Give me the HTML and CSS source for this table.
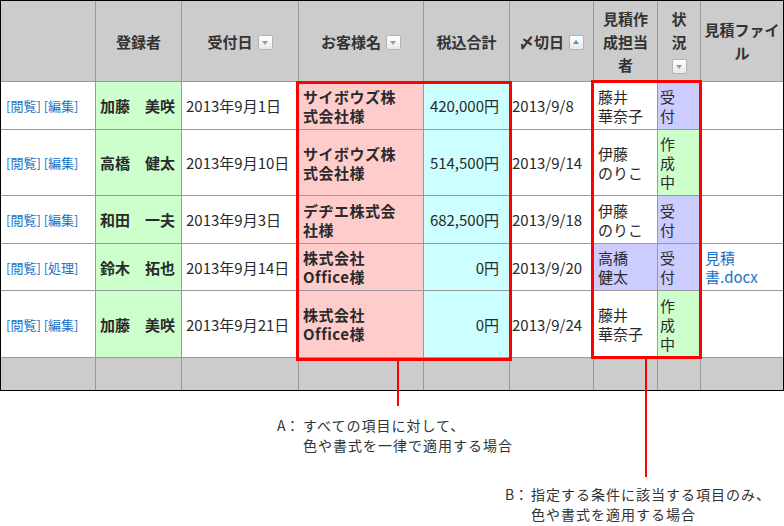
FILE: index.html
```html
<!DOCTYPE html>
<html lang="ja">
<head>
<meta charset="utf-8">
<title>条件書式の例</title>
<link rel="stylesheet" href="styles.css">
</head>
<body>
<div class="figure">
  <div class="frame">
    <table class="grid">
      <thead>
        <tr class="head">
          <th class="w1"></th>
          <th class="w2">登録者</th>
          <th class="w3">受付日<span class="sort"></span></th>
          <th class="w4">お客様名<span class="sort"></span></th>
          <th class="w5">税込合計</th>
          <th class="w6">〆切日<span class="sort asc"></span></th>
          <th class="w7">見積作成担当者</th>
          <th class="w8">状<br>況<br><span class="sort solo"></span></th>
          <th class="w9">見積ファイル</th>
        </tr>
      </thead>
      <tbody>
        <tr class="r48">
          <td class="links"><a href="#">[閲覧]</a> <a href="#">[編集]</a></td>
          <td class="name green">加藤　美咲</td>
          <td class="date">2013年9月1日</td>
          <td class="cust pink">サイボウズ株<br>式会社様</td>
          <td class="amt cyan">420,000円</td>
          <td class="due">2013/9/8</td>
          <td class="staff">藤井<br>華奈子</td>
          <td class="state lav">受<br>付</td>
          <td class="file"></td>
        </tr>
        <tr class="r66">
          <td class="links"><a href="#">[閲覧]</a> <a href="#">[編集]</a></td>
          <td class="name green">高橋　健太</td>
          <td class="date">2013年9月10日</td>
          <td class="cust pink">サイボウズ株<br>式会社様</td>
          <td class="amt cyan">514,500円</td>
          <td class="due">2013/9/14</td>
          <td class="staff">伊藤<br>のりこ</td>
          <td class="state green">作<br>成<br>中</td>
          <td class="file"></td>
        </tr>
        <tr class="r48">
          <td class="links"><a href="#">[閲覧]</a> <a href="#">[編集]</a></td>
          <td class="name green">和田　一夫</td>
          <td class="date">2013年9月3日</td>
          <td class="cust pink">デヂエ株式会<br>社様</td>
          <td class="amt cyan">682,500円</td>
          <td class="due">2013/9/18</td>
          <td class="staff">伊藤<br>のりこ</td>
          <td class="state lav">受<br>付</td>
          <td class="file"></td>
        </tr>
        <tr class="r47">
          <td class="links"><a href="#">[閲覧]</a> <a href="#">[処理]</a></td>
          <td class="name green">鈴木　拓也</td>
          <td class="date">2013年9月14日</td>
          <td class="cust pink">株式会社<br>Office様</td>
          <td class="amt cyan">0円</td>
          <td class="due">2013/9/20</td>
          <td class="staff lav">高橋<br>健太</td>
          <td class="state lav">受<br>付</td>
          <td class="file"><a href="#">見積<br>書.docx</a></td>
        </tr>
        <tr class="r67">
          <td class="links"><a href="#">[閲覧]</a> <a href="#">[編集]</a></td>
          <td class="name green">加藤　美咲</td>
          <td class="date">2013年9月21日</td>
          <td class="cust pink">株式会社<br>Office様</td>
          <td class="amt cyan">0円</td>
          <td class="due">2013/9/24</td>
          <td class="staff">藤井<br>華奈子</td>
          <td class="state green">作<br>成<br>中</td>
          <td class="file"></td>
        </tr>
      </tbody>
      <tfoot>
        <tr class="foot">
          <td></td><td></td><td></td><td></td><td></td><td></td><td></td><td></td><td></td>
        </tr>
      </tfoot>
    </table>
  </div>

  <div class="hl hl-a"></div>
  <div class="hl hl-b"></div>
  <div class="leader leader-a"></div>
  <div class="leader leader-b"></div>

  <div class="notes">
    <div class="note note-a">
      <span class="label">A：</span>
      <span class="body"><span class="line">すべての項目に対して、</span><span class="line">色や書式を一律で適用する場合</span></span>
    </div>
    <div class="note note-b">
      <span class="label">B：</span>
      <span class="body"><span class="line">指定する条件に該当する項目のみ、</span><span class="line">色や書式を適用する場合</span></span>
    </div>
  </div>
</div>
</body>
</html>
```

FILE: styles.css
```css
* { box-sizing: border-box; }

html, body {
  margin: 0;
  padding: 0;
  background: #ffffff;
}

body {
  font-family: "Noto Sans CJK JP", "Noto Sans", sans-serif;
  color: #222222;
}

.figure {
  position: relative;
  width: 784px;
  height: 526px;
}

.frame {
  width: 784px;
  border: 1px solid #000000;
  background: #ffffff;
}

.grid {
  width: 782px;
  table-layout: fixed;
  border-collapse: separate;
  border-spacing: 0;
}

.grid th,
.grid td {
  border-right: 1px solid #999999;
  border-bottom: 1px solid #999999;
  padding: 0 4px;
  vertical-align: middle;
}

.grid th:last-child,
.grid td:last-child {
  border-right: none;
}

.w1 { width: 95px; }
.w2 { width: 86px; }
.w3 { width: 117px; }
.w4 { width: 125px; }
.w5 { width: 86px; }
.w6 { width: 84px; }
.w7 { width: 64px; }
.w8 { width: 43px; }
.w9 { width: 82px; }

.head { height: 81px; }

.head th {
  background: #cccccc;
  font-size: 15px;
  font-weight: bold;
  line-height: 23px;
  color: #333333;
  text-align: center;
  padding: 0 3px;
}

.sort {
  display: inline-block;
  position: relative;
  width: 15px;
  height: 15px;
  margin-left: 5px;
  vertical-align: -2px;
  border: 1px solid #b4b4b4;
  border-radius: 2px;
  background: linear-gradient(#ffffff, #e9e9e9);
}

.sort::after {
  content: "";
  position: absolute;
  left: 3px;
  top: 5px;
  border-left: 3.5px solid transparent;
  border-right: 3.5px solid transparent;
  border-top: 4px solid #9a9a9a;
}

.sort.asc::after {
  top: 4px;
  border-top: none;
  border-bottom: 4px solid #2aa0e6;
}

.sort.solo {
  margin-left: 0;
  vertical-align: middle;
}

.r48 { height: 48px; }
.r66 { height: 66px; }
.r47 { height: 47px; }
.r67 { height: 67px; }
.foot { height: 32px; }

.grid tbody td {
  font-size: 15px;
  line-height: 19px;
  color: #2a2a2a;
}

.foot td {
  background: #cccccc;
  border-bottom: none;
}

.green { background: #ccffcc; }
.pink { background: #ffcccc; }
.cyan { background: #ccffff; }
.lav { background: #ccccff; }

.grid td.links {
  font-size: 13px;
  padding-left: 5px;
  white-space: nowrap;
}

.links a,
.file a {
  color: #1b72c6;
  text-decoration: none;
}

.grid td.name {
  font-weight: bold;
  white-space: nowrap;
}

.grid td.cust {
  font-weight: bold;
  letter-spacing: 0.5px;
  padding-left: 4px;
}

.grid td.amt {
  text-align: right;
  padding-right: 10px;
}

.grid td.due {
  padding-left: 2px;
  white-space: nowrap;
}

.grid td.staff {
  padding-left: 4px;
}

.grid td.state {
  padding-left: 2px;
}

.grid td.file {
  padding-left: 4px;
}

.hl {
  position: absolute;
  border: 3px solid #ff0000;
  pointer-events: none;
}

.hl-a {
  left: 296px;
  top: 81px;
  width: 216px;
  height: 280px;
}

.hl-b {
  left: 591px;
  top: 80px;
  width: 111px;
  height: 279px;
}

.leader {
  position: absolute;
  width: 2px;
  background: #ff0000;
}

.leader-a {
  left: 397px;
  top: 361px;
  height: 45px;
}

.leader-b {
  left: 645px;
  top: 359px;
  height: 118px;
}

.notes {
  display: flex;
  flex-direction: column;
  padding-top: 24px;
  gap: 29px;
}

.note {
  display: flex;
  align-items: flex-start;
  font-size: 14px;
  line-height: 20px;
  letter-spacing: 1px;
  color: #333333;
  white-space: nowrap;
}

.note .label {
  width: 26px;
  flex: none;
  letter-spacing: 0;
}

.note .body {
  display: flex;
  flex-direction: column;
}

.note .line {
  display: block;
}

.note-a { margin-left: 277px; }
.note-b { margin-left: 505px; }
```
